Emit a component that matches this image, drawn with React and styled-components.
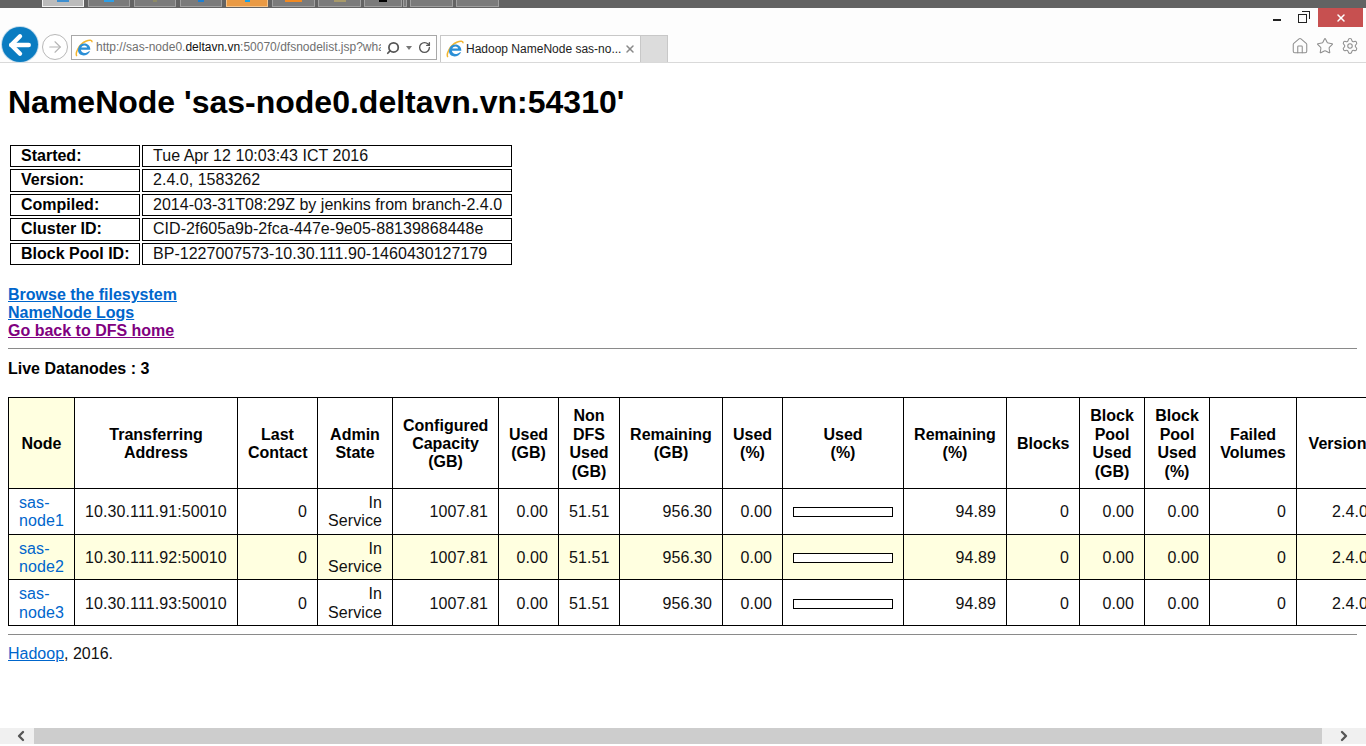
import React from "react";
import styled, { createGlobalStyle } from "styled-components";
import { ArrowLeft, ArrowRight, ChevronLeft, ChevronRight, House, RotateCw, Search, Settings, Star, X } from "lucide-react";

const GlobalStyle = createGlobalStyle`
  html, body { margin: 0; padding: 0; height: 100%; overflow: hidden; background: #fff; }
  body { font-family: "Liberation Sans", Arial, sans-serif; font-size: 16px; line-height: 18.4px; color: #000; }
  #root { height: 100%; }
`;

const taskItems = [
  { width: 42, after: 4, tone: "#bcbcbc", edge: "#f2f2f2", mark: "#3d8fd0", markWidth: 12 },
  { width: 42, after: 4, mark: "#2f9fe6", markWidth: 10 },
  { width: 42, after: 4, mark: "#8d8a66", markWidth: 4 },
  { width: 42, after: 4, mark: "#1f7fd0", markWidth: 6 },
  { width: 42, after: 4, tone: "#e99a45", edge: "#f4c48c", mark: "#17a2e8", markWidth: 5 },
  { width: 43, after: 3, mark: "#f08a24", markWidth: 17 },
  { width: 43, after: 3, mark: "#a89a6a", markWidth: 12 },
  { width: 38, after: 1, mark: "#000", markWidth: 8 },
  { width: 4, after: 3 },
  { width: 43, after: 3 },
  { width: 43, after: 0 },
];

const info = [
  ["Started:", "Tue Apr 12 10:03:43 ICT 2016"],
  ["Version:", "2.4.0, 1583262"],
  ["Compiled:", "2014-03-31T08:29Z by jenkins from branch-2.4.0"],
  ["Cluster ID:", "CID-2f605a9b-2fca-447e-9e05-88139868448e"],
  ["Block Pool ID:", "BP-1227007573-10.30.111.90-1460430127179"],
];

const columns = [
  { label: ["Node"], width: 66 },
  { label: ["Transferring", "Address"], width: 163 },
  { label: ["Last", "Contact"], width: 80 },
  { label: ["Admin", "State"], width: 75 },
  { label: ["Configured", "Capacity", "(GB)"], width: 106 },
  { label: ["Used", "(GB)"], width: 60 },
  { label: ["Non", "DFS", "Used", "(GB)"], width: 61 },
  { label: ["Remaining", "(GB)"], width: 103 },
  { label: ["Used", "(%)"], width: 60 },
  { label: ["Used", "(%)"], width: 121 },
  { label: ["Remaining", "(%)"], width: 103 },
  { label: ["Blocks"], width: 73 },
  { label: ["Block", "Pool", "Used", "(GB)"], width: 65 },
  { label: ["Block", "Pool", "Used", "(%)"], width: 65 },
  { label: ["Failed", "Volumes"], width: 87 },
  { label: ["Version"], width: 82 },
];

const nodes = ["1", "2", "3"];

function IeLogo({ size = 18 }) {
  return (
    <svg width={size} height={size} viewBox="0 0 20 20" fill="none">
      <path d="M2 19C0 16 4 6 12 2.500C16 .8 19 1 19 3.500" stroke="#f2b632" strokeWidth="1.700" />
      <path d="M4 9.500C5 5.500 11 3.500 14.500 6.500C16.500 8 17 10 17 12H6.500C7 16 12 16.500 15.500 13.500H16.800C14 19.500 5 20 3.500 14C3.200 12 3.500 10.500 4 9.500ZM7 9.500H13.500C13 6.500 8 6.500 7 9.500Z" fill="#2b8fd6" />
    </svg>
  );
}

export default function App() {
  return (
    <>
      <GlobalStyle />
      <Window>
        <TaskStrip>
          {taskItems.map((item, i) => (
            <TaskItem key={i} $width={item.width} $after={item.after} $tone={item.tone} $edge={item.edge}>
              {item.mark && <TaskMark $color={item.mark} $width={item.markWidth} />}
            </TaskItem>
          ))}
        </TaskStrip>
        <Caption>
          <Minimize />
          <Restore />
          <CloseButton><X size={12} strokeWidth={3} color="#fff" /></CloseButton>
        </Caption>
        <Toolbar>
          <BackButton><ArrowLeft size={30} strokeWidth={3.5} color="#fff" /></BackButton>
          <ForwardButton><ArrowRight size={18} strokeWidth={1.5} color="#b4b4b4" /></ForwardButton>
          <AddressBar>
            <IeLogo />
            <AddressText>
              http://sas-node0.<b>deltavn.vn</b>:50070/dfsnodelist.jsp?wha
            </AddressText>
            <FlipSearch size={14} strokeWidth={3} color="#555" />
            <Caret />
            <RotateCw size={13} strokeWidth={2.500} color="#555" />
          </AddressBar>
          <TabItem>
            <IeLogo />
            <TabTitle>Hadoop NameNode sas-no...</TabTitle>
            <X size={12} strokeWidth={3} color="#8a8a8a" />
          </TabItem>
          <NewTab />
          <ToolIcons>
            <House size={18} strokeWidth={1.400} color="#8f8f8f" />
            <Star size={18} strokeWidth={1.400} color="#8f8f8f" />
            <Settings size={18} strokeWidth={1.400} color="#8f8f8f" />
          </ToolIcons>
        </Toolbar>
        <Page>
          <Title>NameNode 'sas-node0.deltavn.vn:54310'</Title>
          <InfoTable>
            <tbody>
              {info.map(([key, value]) => (
                <tr key={key}>
                  <InfoKey>{key}</InfoKey>
                  <InfoValue>{value}</InfoValue>
                </tr>
              ))}
            </tbody>
          </InfoTable>
          <LinkList>
            <PageLink href="#">Browse the filesystem</PageLink>
            <PageLink href="#">NameNode Logs</PageLink>
            <PageLink href="#" $visited>Go back to DFS home</PageLink>
          </LinkList>
          <Rule />
          <SectionTitle>Live Datanodes : 3</SectionTitle>
          <NodeTable>
            <colgroup>
              {columns.map((col, i) => <NodeCol key={i} $width={col.width} />)}
            </colgroup>
            <thead>
              <tr>
                {columns.map((col, i) => (
                  <HeadCell key={i} $sorted={i === 0}>
                    {col.label.map((line, j) => <HeadLine key={j}>{line}</HeadLine>)}
                  </HeadCell>
                ))}
              </tr>
            </thead>
            <tbody>
              {nodes.map((n) => (
                <NodeRow key={n} $alt={n === "2"}>
                  <Cell $left><NodeLink href="#">sas-node{n}</NodeLink></Cell>
                  <Cell $left>10.30.111.9{n}:50010</Cell>
                  <Cell>0</Cell>
                  <Cell>In Service</Cell>
                  <Cell>1007.81</Cell>
                  <Cell>0.00</Cell>
                  <Cell>51.51</Cell>
                  <Cell>956.30</Cell>
                  <Cell>0.00</Cell>
                  <Cell><UsageBar /></Cell>
                  <Cell>94.89</Cell>
                  <Cell>0</Cell>
                  <Cell>0.00</Cell>
                  <Cell>0.00</Cell>
                  <Cell>0</Cell>
                  <Cell>2.4.0</Cell>
                </NodeRow>
              ))}
            </tbody>
          </NodeTable>
          <Rule $lower />
          <Footer><FooterLink href="#">Hadoop</FooterLink>, 2016.</Footer>
        </Page>
        <ScrollBar>
          <ScrollEnd $left><ChevronLeft size={16} strokeWidth={3.500} color="#555" /></ScrollEnd>
          <ScrollThumb />
          <ScrollEnd><ChevronRight size={16} strokeWidth={3.500} color="#555" /></ScrollEnd>
        </ScrollBar>
      </Window>
    </>
  );
}

const Window = styled.div`
  display: flex;
  flex-direction: column;
  width: 1366px;
  height: 746px;
  overflow: hidden;
  background: #fff;
`;

const TaskStrip = styled.div`
  display: flex;
  flex: none;
  height: 8px;
  padding-left: 42px;
  background: #636363;
`;

const TaskItem = styled.div`
  display: flex;
  justify-content: center;
  width: ${(p) => p.$width}px;
  height: 7px;
  margin-right: ${(p) => p.$after}px;
  box-sizing: border-box;
  background: ${(p) => p.$tone || "#7b7b7b"};
  border: 1px solid ${(p) => p.$edge || "#a0a0a0"};
  border-top: none;
`;

const TaskMark = styled.div`
  width: ${(p) => p.$width}px;
  height: 2px;
  background: ${(p) => p.$color};
`;

const Caption = styled.div`
  display: flex;
  align-items: flex-start;
  justify-content: flex-end;
  flex: none;
  height: 27px;
  padding-right: 3px;
  background: #fdfdfd;
`;

const Minimize = styled.div`
  width: 8px;
  height: 2px;
  margin: 11px 17px 0 0;
  background: #222;
`;

const Restore = styled.div`
  position: relative;
  width: 7px;
  height: 7px;
  margin: 6px 11px 0 0;
  border: 1.500px solid #222;
  &::before {
    content: "";
    position: absolute;
    top: -4px;
    right: -4px;
    width: 7px;
    height: 7px;
    border-top: 1.500px solid #222;
    border-right: 1.500px solid #222;
  }
`;

const CloseButton = styled.div`
  display: flex;
  align-items: center;
  justify-content: center;
  width: 45px;
  height: 19px;
  background: #c75050;
`;

const Toolbar = styled.div`
  display: flex;
  align-items: flex-end;
  flex: none;
  height: 27px;
  border-bottom: 1px solid #d9d9d9;
  background: #fdfdfd;
`;

const BackButton = styled.div`
  display: flex;
  align-items: center;
  justify-content: center;
  width: 36px;
  height: 35px;
  margin: 0 4px 0 2px;
  flex: none;
  border-radius: 50%;
  background: #0a7cc1;
  box-shadow: 0 0 0 1px #c3dcec;
`;

const ForwardButton = styled.div`
  display: flex;
  align-items: center;
  justify-content: center;
  width: 26px;
  height: 26px;
  margin: 0 3px 2px 0;
  flex: none;
  box-sizing: border-box;
  border-radius: 50%;
  border: 1px solid #b8b8b8;
  background: #fff;
`;

const AddressBar = styled.div`
  display: flex;
  align-items: center;
  gap: 3px;
  width: 366px;
  height: 25px;
  margin-bottom: 2px;
  padding: 0 5px 0 3px;
  box-sizing: border-box;
  border: 1px solid #a8a8a8;
  background: #fff;
`;

const AddressText = styled.div`
  flex: 1;
  margin-right: 2px;
  overflow: hidden;
  white-space: nowrap;
  font-size: 12px;
  color: #6f6f6f;
  b { font-weight: normal; color: #111; }
`;

const FlipSearch = styled(Search)`
  transform: scaleX(-1);
`;

const Caret = styled.div`
  width: 0;
  height: 0;
  margin: 0 3px 0 3px;
  border: 3.500px solid transparent;
  border-top: 4px solid #777;
  border-bottom: none;
`;

const TabItem = styled.div`
  display: flex;
  align-items: center;
  width: 201px;
  height: 27px;
  margin-left: 3px;
  padding: 0 4px 0 5px;
  box-sizing: border-box;
  border: 1px solid #c8c8c8;
  border-bottom: none;
  background: #fff;
`;

const TabTitle = styled.div`
  flex: 1;
  margin-left: 2px;
  font-size: 12px;
  white-space: nowrap;
  color: #222;
`;

const NewTab = styled.div`
  width: 27px;
  height: 27px;
  box-sizing: border-box;
  background: #dcdcdc;
  border: 1px solid #c8c8c8;
  border-left: none;
  border-bottom: none;
`;

const ToolIcons = styled.div`
  display: flex;
  align-items: center;
  gap: 7px;
  margin-left: auto;
  margin-right: 7px;
  margin-bottom: 7px;
`;

const Page = styled.div`
  flex: 1;
  min-height: 0;
  overflow: hidden;
  padding: 0 8px;
`;

const Title = styled.h1`
  margin: 21px 0 22px;
  font-size: 32px;
  line-height: normal;
  font-weight: bold;
  white-space: nowrap;
`;

const InfoTable = styled.table`
  table-layout: fixed;
  width: 506px;
  border-spacing: 2px;
  border-collapse: separate;
`;

const InfoKey = styled.td`
  width: 108px;
  padding: 1px 10px;
  border: 1px solid #000;
  font-weight: bold;
  white-space: nowrap;
`;

const InfoValue = styled.td`
  padding: 1px 10px;
  border: 1px solid #000;
  letter-spacing: 0.03px;
  white-space: nowrap;
  color: #111;
`;

const LinkList = styled.div`
  display: flex;
  flex-direction: column;
  align-items: flex-start;
  margin-top: 19px;
`;

const PageLink = styled.a`
  font-weight: bold;
  line-height: 18px;
  color: ${(p) => (p.$visited ? "#800080" : "#0066cc")};
`;

const Rule = styled.hr`
  width: 1349px;
  height: 1px;
  margin: 8px 0 ${(p) => (p.$lower ? "10px" : "11px")};
  border: none;
  background: #8a8a8a;
`;

const SectionTitle = styled.div`
  margin-bottom: 19px;
  font-weight: bold;
`;

const NodeTable = styled.table`
  table-layout: fixed;
  width: 1370px;
  border-collapse: collapse;
`;

const NodeCol = styled.col`
  width: ${(p) => p.$width}px;
`;

const HeadCell = styled.th`
  padding: 9px 10px 7px;
  border: 1px solid #000;
  background: ${(p) => (p.$sorted ? "#ffffe0" : "#fff")};
  text-align: center;
  font-weight: bold;
`;

const HeadLine = styled.div`
  white-space: nowrap;
`;

const NodeRow = styled.tr`
  background: ${(p) => (p.$alt ? "#ffffe0" : "#fff")};
`;

const Cell = styled.td`
  padding: 5px 10px 3px;
  border: 1px solid #000;
  line-height: 18.33px;
  letter-spacing: 0.1px;
  color: #111;
  text-align: ${(p) => (p.$left ? "left" : "right")};
`;

const NodeLink = styled.a`
  color: #0066cc;
  text-decoration: none;
`;

const FooterLink = styled.a`
  color: #0066cc;
  text-decoration: underline;
`;

const UsageBar = styled.div`
  width: 100px;
  height: 10px;
  box-sizing: border-box;
  border: 1px solid #000;
  background: #fff;
`;

const Footer = styled.div`
  color: #111;
`;

const ScrollBar = styled.div`
  display: flex;
  flex: none;
  height: 16px;
  margin-bottom: 2px;
  background: #f0f0f0;
`;

const ScrollEnd = styled.div`
  display: flex;
  align-items: center;
  justify-content: ${(p) => (p.$left ? "flex-start" : "center")};
  width: ${(p) => (p.$left ? "34px" : "44px")};
  padding-left: ${(p) => (p.$left ? "13px" : "0")};
  box-sizing: border-box;
  flex: none;
`;

const ScrollThumb = styled.div`
  width: 1288px;
  background: #cdcdcd;
`;
